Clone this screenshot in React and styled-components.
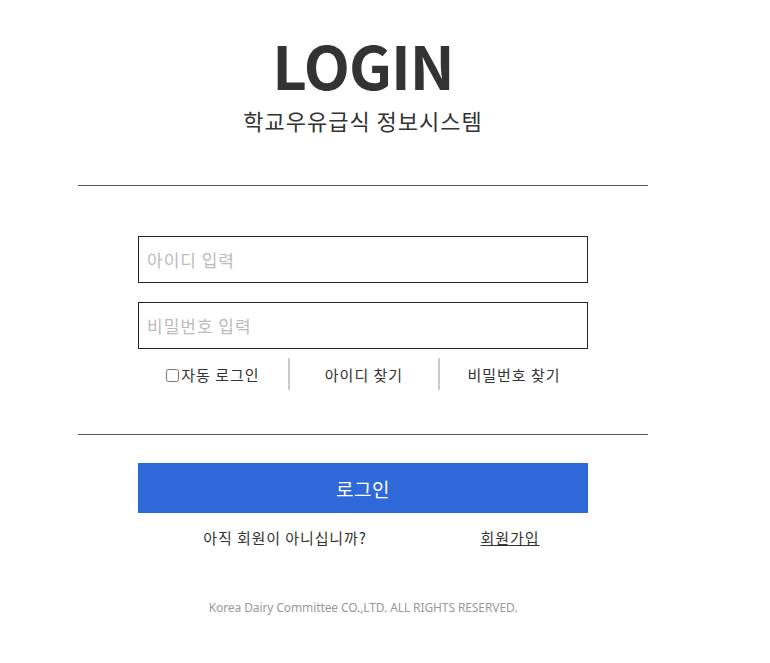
import React from "react";
import styled, { createGlobalStyle } from "styled-components";

const Global = createGlobalStyle`
  html, body { margin: 0; padding: 0; background: #fff; }
  body { font-family: "Noto Sans CJK KR", "Noto Sans", sans-serif; color: #333; }
  * { box-sizing: border-box; }
`;

const Page = styled.div`
  padding: 28px 0 0 78px;
`;

const Box = styled.div`
  width: 570px;
  display: flex;
  flex-direction: column;
  align-items: center;
`;

const Title = styled.h1`
  margin: 0;
  font-size: 60px;
  font-weight: 700;
  line-height: 72px;
  color: #333;
  letter-spacing: -1px;
`;

const Subtitle = styled.p`
  margin: 5px 0 0;
  font-size: 22px;
  line-height: 30px;
  letter-spacing: 1px;
  color: #333;
`;

const Rule = styled.hr`
  width: 100%;
  margin: ${(p) => p.$top}px 0 0;
  border: 0;
  border-top: 1px solid #555;
`;

const Form = styled.div`
  width: 450px;
  display: flex;
  flex-direction: column;
`;

const Input = styled.input`
  width: 100%;
  height: 47px;
  border: 1px solid #222;
  padding: 0 8px;
  font-family: inherit;
  font-size: 17px;
  letter-spacing: 1px;
  margin-top: ${(p) => p.$top}px;
  outline: none;
  &::placeholder { color: #bbb; }
`;

const Options = styled.div`
  display: grid;
  grid-template-columns: repeat(3, 1fr);
  margin-top: 9px;
`;

const Option = styled.label`
  display: flex;
  align-items: center;
  justify-content: center;
  height: 32px;
  font-size: 15px;
  letter-spacing: 1px;
  color: #333;
  border-left: ${(p) => (p.$divider ? "2px solid #ccc" : "none")};
  cursor: pointer;
`;

const Check = styled.input`
  width: 13px;
  height: 13px;
  margin: 2px 2px 0 0;
`;

const Button = styled.button`
  width: 450px;
  height: 50px;
  margin-top: 28px;
  background: #2f69d9;
  color: #fff;
  border: 0;
  font-family: inherit;
  font-size: 19px;
  letter-spacing: 0.5px;
`;

const SignupRow = styled.div`
  width: 450px;
  display: grid;
  grid-template-columns: 2fr 1fr;
  margin-top: 13px;
  font-size: 15px;
  line-height: 24px;
  letter-spacing: 0.9px;
`;

const Cell = styled.div`
  text-align: center;
  padding-right: ${(p) => p.$pr || 0}px;
`;

const SignupLink = styled.a`
  color: #333;
  text-decoration: underline;
`;

const Footer = styled.p`
  margin: 49px 0 0;
  font-size: 12px;
  letter-spacing: -0.1px;
  color: #999;
  font-family: "Noto Sans", "Noto Sans CJK KR", sans-serif;
`;

export default function App() {
  return (
    <>
      <Global />
      <Page>
        <Box>
          <Title>LOGIN</Title>
          <Subtitle>학교우유급식 정보시스템</Subtitle>
          <Rule $top={50} />
          <Form>
            <Input $top={50} placeholder="아이디 입력" />
            <Input $top={19} type="password" placeholder="비밀번호 입력" />
            <Options>
              <Option>
                <Check type="checkbox" />자동 로그인
              </Option>
              <Option $divider>아이디 찾기</Option>
              <Option $divider>비밀번호 찾기</Option>
            </Options>
          </Form>
          <Rule $top={44} />
          <Button>로그인</Button>
          <SignupRow>
            <Cell $pr={6}>아직 회원이 아니십니까?</Cell>
            <Cell $pr={6}>
              <SignupLink href="#">회원가입</SignupLink>
            </Cell>
          </SignupRow>
          <Footer>Korea Dairy Committee CO.,LTD. ALL RIGHTS RESERVED.</Footer>
        </Box>
      </Page>
    </>
  );
}
